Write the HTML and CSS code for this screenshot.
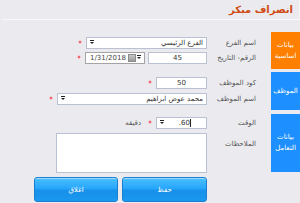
FILE: index.html
```html
<!DOCTYPE html>
<html lang="ar" dir="rtl">
<head>
<meta charset="utf-8">
<title>انصراف مبكر</title>
<link rel="stylesheet" href="styles.css">
</head>
<body>
<div class="page">
  <header class="hdr"><h1 class="title">انصراف مبكر</h1></header>
  <main class="main">
    <section class="sec sec1">
      <div class="tab tab-orange">بيانات<br>اساسية</div>
      <div class="fields f1">
        <div class="row">
          <span class="lbl">اسم الفرع</span>
          <div class="ctl select w-branch"><span class="val">الفرع الرئيسي</span><span class="arrow"></span></div>
          <span class="req" title="*"></span>
        </div>
        <div class="row">
          <span class="lbl">الرقم- التاريخ</span>
          <div class="ctl input w-num center">45</div>
          <div class="ctl date w-date"><span class="dval">1/31/2018</span><span class="cal"></span><span class="arrow"></span></div>
          <span class="req" title="*"></span>
        </div>
      </div>
    </section>
    <section class="sec sec2">
      <div class="tab tab-blue">الموظف</div>
      <div class="fields f2">
        <div class="row">
          <span class="lbl">كود الموظف</span>
          <div class="ctl input w-code center">50</div>
          <span class="req" title="*"></span>
        </div>
        <div class="row">
          <span class="lbl">اسم الموظف</span>
          <div class="ctl select w-emp"><span class="val">محمد عوض ابراهيم</span><span class="arrow"></span></div>
          <span class="req" title="*"></span>
        </div>
      </div>
    </section>
    <section class="sec sec3">
      <div class="tab tab-blue tab3">بيانات<br>التعامل</div>
      <div class="fields f3">
        <div class="row">
          <span class="lbl">الوقت</span>
          <div class="ctl select w-code time"><span class="tval">60.</span><span class="caret"></span><span class="arrow"></span></div>
          <span class="req" title="*"></span>
          <span class="unit">دقيقه</span>
        </div>
        <div class="row row-notes">
          <span class="lbl">الملاحظات</span>
          <div class="ctl notes"></div>
        </div>
      </div>
    </section>
    <div class="actions">
      <button class="btn btn-save">حفظ</button>
      <button class="btn btn-close">اغلاق</button>
    </div>
  </main>
</div>
</body>
</html>
```
FILE: styles.css
```css
html, body {
  margin: 0;
  padding: 0;
}
body {
  background: #ebebef;
  font-family: "DejaVu Sans", "Noto Sans", sans-serif;
  font-size: 7px;
  color: #444;
  direction: rtl;
  width: 300px;
  height: 203px;
  overflow: hidden;
}
.page {
  width: 300px;
}
.hdr {
  height: 19px;
  width: 297px;
  border-bottom: 1px solid #f8f8fb;
  border-left: 1px solid transparent;
  border-right: 1px solid #f6f6f9;
  box-sizing: content-box;
  display: flex;
  align-items: center;
}
.title {
  margin: 0 6px 0 0;
  font-size: 10px;
  font-weight: bold;
  color: #cf4a14;
  line-height: 12px;
}
.main {
  display: flex;
  flex-direction: column;
  padding-top: 12px;
}
.sec {
  display: flex;
  flex-direction: row;
  align-items: flex-start;
}
.sec1 { height: 37px; }
.sec2 { height: 38px; margin-top: 3px; }
.sec3 { margin-top: 4px; }
.tab {
  width: 29px;
  flex: none;
  color: #fff;
  font-size: 7px;
  line-height: 11px;
  display: flex;
  align-items: center;
  justify-content: center;
  text-align: center;
}
.tab-orange { background: #ff7f00; height: 37px; }
.tab-blue { background: #1e8fff; height: 38px; }
.tab3 { height: 58px; }
.fields {
  display: flex;
  flex-direction: column;
  padding-right: 15px;
}
.f1 { padding-top: 5px; gap: 3px; }
.f2 { padding-top: 5px; gap: 4px; }
.f3 { padding-top: 3px; gap: 4px; }
.row {
  display: flex;
  flex-direction: row;
  align-items: center;
  height: 12px;
}
.row-notes {
  height: 40px;
  align-items: flex-start;
}
.row-notes .lbl { margin-top: 7px; }
.lbl {
  width: 49px;
  flex: none;
  text-align: right;
  color: #555;
  font-size: 7px;
  white-space: nowrap;
}
.ctl {
  box-sizing: border-box;
  height: 12px;
  background: #fff;
  border: 1px solid #b9c1d2;
  flex: none;
  display: flex;
  align-items: center;
  color: #333;
  font-size: 7px;
  white-space: nowrap;
  overflow: hidden;
}
.center { justify-content: center; }
.select {
  justify-content: space-between;
  padding: 0 3px 0 3px;
}
.w-branch { width: 121px; }
.w-emp { width: 150px; }
.w-num { width: 59px; }
.w-code { width: 51px; }
.w-date {
  width: 60px;
  margin-right: 3px;
  border-color: #a3a3a8;
  height: 12px;
  direction: ltr;
  padding-left: 4px;
  justify-content: flex-start;
}
.dval { flex: 1; color: #444; }
.cal {
  width: 6px;
  height: 6px;
  background: linear-gradient(#c8c8c8, #9a9a9a);
  border: 1px solid #8a8a8a;
  margin-right: 1px;
}
.arrow {
  width: 0;
  height: 0;
  border-left: 2px solid transparent;
  border-right: 2px solid transparent;
  border-top: 2px solid #222;
  flex: none;
  position: relative;
}
.arrow::before {
  content: "";
  position: absolute;
  left: -2px;
  top: -4px;
  width: 4px;
  height: 1px;
  background: #222;
}
.w-date .arrow { margin-right: 3px; }
.req {
  width: 2px;
  height: 2px;
  background: #f24f5f;
  border-radius: 1px;
  box-shadow: 0 0 1px 0.5px rgba(242, 90, 100, 0.6);
  margin-right: 5px;
  margin-top: -2px;
  flex: none;
}
.time {
  justify-content: flex-start;
  padding-right: 14px;
}
.time .arrow { margin-right: auto; }
.tval { color: #333; }
.caret {
  width: 1px;
  height: 8px;
  background: #222;
  margin-right: 1px;
  order: -1;
}
.unit {
  margin-right: 8px;
  color: #555;
  font-size: 7px;
}
.notes {
  width: 151px;
  height: 40px;
}
.actions {
  display: flex;
  flex-direction: row;
  gap: 4px;
  padding-right: 93px;
  margin-top: 4px;
}
.btn {
  box-sizing: border-box;
  height: 25px;
  border: 1px solid #1a7fd0;
  border-radius: 3px;
  background: linear-gradient(#4cc0ff 0%, #26a6fb 45%, #1790ea 55%, #1a98ee 100%);
  box-shadow: inset 0 1px 0 rgba(255,255,255,0.45);
  color: #fff;
  font-family: "DejaVu Sans", sans-serif;
  font-size: 7px;
  padding: 0;
}
.btn-save { width: 85px; }
.btn-close { width: 84px; }
```
